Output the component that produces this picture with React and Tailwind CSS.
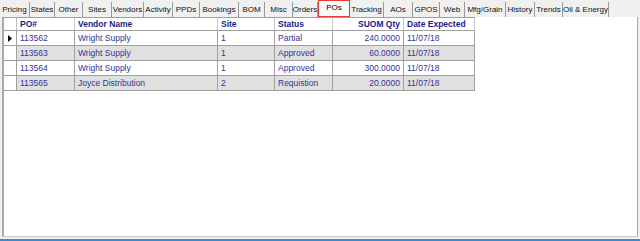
import React from "react";

const tabs = [
  ["Pricing", 30], ["States", 25], ["Other", 28], ["Sites", 29], ["Vendors", 32],
  ["Activity", 29], ["PPDs", 27], ["Bookings", 39], ["BOM", 26], ["Misc", 28],
  ["Orders", 25], ["POs", 32], ["Tracking", 34], ["AOs", 29], ["GPOS", 27],
  ["Web", 25], ["Mfg/Grain", 41], ["History", 29], ["Trends", 28], ["Oil & Energy", 46],
];

const cols = [
  { label: "PO#", w: 58, align: "left" },
  { label: "Vendor Name", w: 143, align: "left" },
  { label: "Site", w: 57, align: "left" },
  { label: "Status", w: 58, align: "left" },
  { label: "SUOM Qty", w: 71, align: "right" },
  { label: "Date Expected", w: 71, align: "left" },
];

const rows = [
  ["113562", "Wright Supply", "1", "Partial", "240.0000", "11/07/18"],
  ["113563", "Wright Supply", "1", "Approved", "60.0000", "11/07/18"],
  ["113564", "Wright Supply", "1", "Approved", "300.0000", "11/07/18"],
  ["113565", "Joyce Distribution", "2", "Requistion", "20.0000", "11/07/18"],
];

export default function App() {
  return (
    <div className="w-[640px] h-[241px] bg-[#f0f0f0] flex flex-col overflow-hidden font-['Liberation_Sans',Arial,sans-serif] text-[8.5px] leading-none">
      <div className="h-[17px] flex items-end shrink-0 text-[8px]">
        {tabs.map(([t, w]) => {
          const sel = t === "POs";
          return sel ? (
            <div
              key={t}
              style={{ width: w }}
              className="h-[17px] shrink-0 border border-[#e23b35] bg-[#fbfbfb] flex items-center justify-center text-black pb-[1px] whitespace-nowrap"
            >
              {t}
            </div>
          ) : (
            <div
              key={t}
              style={{ width: w }}
              className="h-[15px] shrink-0 border-r border-[#9a9a9a] flex items-center justify-center text-[#111] pt-[1px] whitespace-nowrap"
            >
              {t}
            </div>
          );
        })}
      </div>
      <div className="h-[220px] ml-[2px] mr-[2px] bg-white border-l-2 border-l-[#a9a9a9] border-r border-r-[#a9a9a9] border-b border-b-[#c8c8c8] flex flex-col items-start shrink-0">
        <div className="flex flex-col border-t border-[#a0a0a0]">
          <div className="flex h-[13px] border-b border-[#a0a0a0]">
            <div className="w-[13px] border-r border-[#c0c0c0]" />
            {cols.map((c) => (
              <div
                key={c.label}
                style={{ width: c.w }}
                className={`border-r border-[#c8c8c8] px-[3px] flex items-center font-bold text-[#1c1c8a] whitespace-nowrap ${c.align === "right" ? "justify-end" : ""}`}
              >
                {c.label}
              </div>
            ))}
          </div>
          {rows.map((r, i) => (
            <div key={i} className="flex h-[15px] border-b border-[#a0a0a0]">
              <div className="w-[13px] border-r border-[#a0a0a0] bg-white flex items-center justify-center">
                {i === 0 && (
                  <svg width="4" height="7" viewBox="0 0 4 7">
                    <path d="M0 0 L4 3.5 L0 7 Z" fill="#000" />
                  </svg>
                )}
              </div>
              {r.map((v, j) => (
                <div
                  key={j}
                  style={{ width: cols[j].w }}
                  className={`border-r border-[#a0a0a0] px-[3px] flex items-center text-[#33339a] whitespace-nowrap ${i % 2 === 1 ? "bg-[#e0e0e0]" : "bg-white"} ${cols[j].align === "right" ? "justify-end" : ""}`}
                >
                  {v}
                </div>
              ))}
            </div>
          ))}
        </div>
      </div>
      <div className="flex-1" />
      <div className="h-[2px] bg-[#3a8ad6] shrink-0" />
    </div>
  );
}
